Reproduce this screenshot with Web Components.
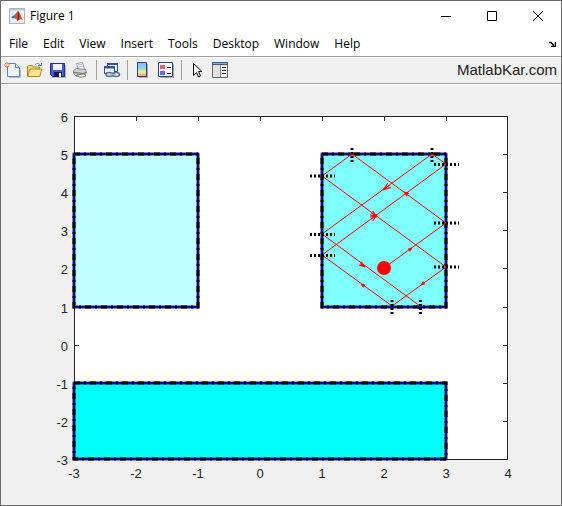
<!DOCTYPE html>
<html lang="en">
<head>
<meta charset="utf-8">
<title>Figure 1</title>
<style>
html,body{height:100%;margin:0}
body{font:12px/16px "Open Sans","Noto Sans",sans-serif;color:#000;background:#fff}
</style>
</head>
<body>
<figure-window>
  <title-bar slot="title">Figure 1</title-bar>
  <menu-bar slot="menu">
    <menu-entry>File</menu-entry><menu-entry>Edit</menu-entry><menu-entry>View</menu-entry><menu-entry>Insert</menu-entry><menu-entry>Tools</menu-entry><menu-entry>Desktop</menu-entry><menu-entry>Window</menu-entry><menu-entry>Help</menu-entry>
  </menu-bar>
  <tool-bar slot="tools">MatlabKar.com</tool-bar>
  <ray-plot></ray-plot>
</figure-window>
<script>
const define = (name, html, setup) => customElements.define(name, class extends HTMLElement {
  constructor() {
    super();
    const t = document.createElement('template');
    t.innerHTML = html;
    this.attachShadow({mode: 'open'}).append(t.content.cloneNode(true));
    if (setup) setup(this.shadowRoot);
  }
});

define('figure-window', `<style>
:host{display:flex;flex-direction:column;box-sizing:border-box;min-height:100%;border:1px solid #6b6b6b;background:#f0f0f0}
main{flex:1}
</style><slot name="title"></slot><slot name="menu"></slot><slot name="tools"></slot><main><slot></slot></main>`);

define('title-bar', `<style>
:host{display:flex;align-items:center;height:30px;background:#fff;padding-left:8px}
h1{flex:1;margin:0 0 0 5px;font:inherit}
button{width:46px;height:30px;padding:0;border:0;background:none;display:grid;place-items:center}
svg{display:block}
</style>
<svg width="16" height="16" viewBox="0 0 16 16"><rect x=".5" y=".5" width="15" height="15" fill="#edf1f5" stroke="#a9b4c0"/><path d="M1 1h14v1.500H1z" fill="#bfccd8"/><path d="M2 9l3-1.500L9 3 7 11l-2-1-1 .5z" fill="#397ca6"/><path d="M5 10c2-1 2-6 4-7 2 1 3 6 5 9-2-1-3-1-4 0l-2 1c0-2-1-3-3-3z" fill="#d35a24"/><path d="M9 3c-.5 3 0 6-1 10l2-2c1-3 0-6-1-8z" fill="#7d221b"/></svg>
<h1><slot></slot></h1>
<button aria-label="Minimize"><svg width="10" height="10"><path d="M0 5.500h10" stroke="#000"/></svg></button>
<button aria-label="Maximize"><svg width="10" height="10"><path d="M.5.500h9v9h-9z" fill="none" stroke="#000"/></svg></button>
<button aria-label="Close"><svg width="10" height="10"><path d="M0 0l10 10M10 0L0 10" stroke="#000"/></svg></button>`);

define('menu-bar', `<style>
:host{display:block;background:#fff}
nav{display:flex;align-items:center;height:25px;padding:0 5px 0 8px;gap:15px}
button{margin-left:auto;padding:0;border:0;background:none}
svg{display:block}
</style><nav><slot></slot><button aria-label="Dock figure"><svg width="7" height="6"><path d="M0 1.500h2l3 3M6.500 1v4.500H2" fill="none" stroke="#000" stroke-width="1.500"/></svg></button></nav>`);

define('menu-entry', `<style>
:host{display:block}
button{display:block;padding:0;border:0;background:none;font:inherit;color:inherit}
</style><button><slot></slot></button>`);

const icons = {
new: `<path d="M5 3h8l4 4v9H5z" fill="#b4bccb"/><path d="M3.500 1.500h8l4 4v9h-12z" fill="#eef4ff" stroke="#6580ae"/><path d="M11.500 1.500v4h4" fill="#c6d8f4" stroke="#6580ae"/><path d="M3 0v6M0 3h6M1 1l4 4M5 1L1 5" stroke="#df7d4b"/><circle cx="3" cy="3" r="1.300" fill="#ffd6a2"/>`,
open: `<path d="M.5 14V4.500l1-1h4l1 1.500h6v2" fill="#f5d875" stroke="#b6861b"/><path d="M.8 14.500l2-7.500h12l-2 7.500z" fill="#ffe694" stroke="#b6861b"/><path d="M8 3c1-2 4-2 5 0M11 3.500h3.500V1" fill="none" stroke="#587c9e"/>`,
save: `<path d="M2 3h14v13H2z" fill="#b4b4c4"/><path d="M.5 1.500h14v13h-12l-2-2z" fill="#4a55d0" stroke="#292c84"/><path d="M3 2h9v6H3z" fill="#eff3ff"/><path d="M4 10h8v5H4z" fill="#18194c"/><path d="M9 11h2v4H9z" fill="#fff"/>`,
print: `<path d="M3.500 1.500l6-1 2 7-6 1z" fill="#fff" stroke="#8d9cb5"/><path d="M.5 8.500l3-2 9 1 1 3-2 3-8 1-3-3z" fill="#d0d0d0" stroke="#888"/><path d="M1 10.500l9 1 3-1M3 13.500l7-1" fill="none" stroke="#666"/><path d="M4 13l7-1 2 2-6 1.500z" fill="#eee" stroke="#888"/><path d="M5 3l4-.5M5.500 5l4-.5" stroke="#a5b8da"/>`,
link: `<path d="M3.500 1.500h10v8h-10z" fill="#eaf2ff" stroke="#315391"/><path d="M3 2h11" stroke="#315391" stroke-width="2"/><path d="M.5 4.500h10v7H.5z" fill="#f3f8ff" stroke="#315391"/><path d="M0 5.500h11" stroke="#315391" stroke-width="2"/><ellipse cx="5.500" cy="12.500" rx="3.500" ry="2" fill="#c7d8e8" stroke="#57738f" stroke-width="1.500"/><ellipse cx="12" cy="12.500" rx="3.500" ry="2" fill="none" stroke="#57738f" stroke-width="1.500"/><path d="M6 12.500h6" stroke="#9fb8cb"/>`,
bar: `<defs><linearGradient id="g" x2="0" y2="1"><stop stop-color="#a9a0ff"/><stop offset=".4" stop-color="#76dff4"/><stop offset=".7" stop-color="#f4ee8c"/><stop offset="1" stop-color="#f48b86"/></linearGradient></defs><path d="M4 2h9v14H4z" fill="#aaa"/><path d="M2.500.500h9v14h-9z" fill="url(#g)" stroke="#2d456f"/>`,
legend: `<path d="M2 2h14v14H2z" fill="#aaa"/><path d="M.5.500h14v14H.5z" fill="#fafafa" stroke="#294478"/><path d="M2 3h5v4H2z" fill="#e65e61"/><path d="M2 9h5v4H2z" fill="#6669e7"/><path d="M9 5.500h4M9 11.500h4" stroke="#111"/>`,
arrow: `<path d="M4.500 1.500v12l3-3 2 4.500 2-1-2-4.500h3.500z" fill="#fff" stroke="#000"/>`,
panel: `<path d="M.5.500h15v15H.5z" fill="#e2e2e2" stroke="#666"/><path d="M0 0h16v3H0z" fill="#355f88"/><path d="M1 1h14v1H1z" fill="#79b1df"/><path d="M8.500 3v12" stroke="#888"/><path d="M9 4h6v11H9z" fill="#fff"/><path d="M10 5.500h4M10 8.500h4M10 11.500h4" stroke="#222"/>`
};
define('tool-icon', `<style>
:host{display:block}
button{display:block;padding:0;border:0;background:none}svg{display:block;overflow:visible}
</style><button><svg width="16" height="16" viewBox="0 0 16 16"></svg></button>`);
const fillIcons = root => root.querySelectorAll('tool-icon').forEach(el => {
  customElements.upgrade(el);
  const b = el.shadowRoot.querySelector('button');
  b.setAttribute('aria-label', el.dataset.label);
  b.firstElementChild.innerHTML = icons[el.dataset.icon];
});
define('tool-bar', `<style>
:host{display:flex;align-items:center;box-sizing:border-box;height:28px;padding:0 4px 0 3px;border-top:1px solid #a0a0a0;border-bottom:1px solid #a0a0a0;box-shadow:inset 0 1px #fff,0 1px #fff;background:#f0f0f0}
div{display:flex;gap:7px;align-items:center}
i{width:1px;height:20px;background:#a0a0a0}
span{margin-left:auto;font:15px/20px "Liberation Sans",sans-serif;color:#222}
</style><div>
<tool-icon data-icon="new" data-label="New Figure"></tool-icon><tool-icon data-icon="open" data-label="Open File"></tool-icon><tool-icon data-icon="save" data-label="Save Figure"></tool-icon><tool-icon data-icon="print" data-label="Print Figure"></tool-icon><i></i>
<tool-icon data-icon="link" data-label="Link Plot"></tool-icon><i></i>
<tool-icon data-icon="bar" data-label="Insert Colorbar"></tool-icon><tool-icon data-icon="legend" data-label="Insert Legend"></tool-icon><i></i>
<tool-icon data-icon="arrow" data-label="Edit Plot"></tool-icon><tool-icon data-icon="panel" data-label="Open Property Inspector"></tool-icon>
</div><span><slot></slot></span>`, fillIcons);

define('ray-plot', `<style>
:host{display:block}
svg{display:block;width:100%}
text{font:13px "Liberation Sans",sans-serif;fill:#262626}
.y{text-anchor:end}.x{text-anchor:middle}
.edge{fill:none;stroke:#0000c0;stroke-width:2;stroke-linejoin:round}
.halo{fill:none;stroke:#00000066;stroke-width:4;stroke-linejoin:round}
.dash{fill:none;stroke:#000;stroke-width:3;stroke-dasharray:6 4 2 4}
.axis{fill:none;stroke:#262626}
.ray{fill:none;stroke:#f00}
.normal{fill:none;stroke:#000;stroke-width:3;stroke-dasharray:2 2}
</style><svg viewBox="1 84 560 421" role="img" aria-label="Reflected ray inside a box">
<path d="M74 116h434v343H74z" fill="#fff"/><g id="axes"></g><g id="boxes"></g>
<path class="ray" d="M384 268L446 223 352 154 322 176 446 267 392 306 322 255 446 164 432 154 322 234 420 306"/>
<g id="heads"></g><circle cx="384" cy="268" r="7" fill="#f00"/>
<path class="normal" d="M310 176h25M310 234.500h25M310 255.500h25M434 164.500h25M434 223h25M434 267h25M352 148v14M432 148v14M392 300v14M420.500 300v14"/>
</svg>`, root => {
  const get = id => root.getElementById(id);
  const px = x => 74 + (x + 3) * 62, py = y => Math.round(116 + (6 - y) * 343 / 9);
  let d = 'M74.500 116.500H507.500V459.500H74.500z', labels = '';
  for (let x = -3; x <= 4; x++) {
    if (x > -3 && x < 4) d += `M${px(x) + .5} 116v5M${px(x) + .5} 460v-5`;
    labels += `<text class="x" x="${px(x)}" y="478">${x}</text>`;
  }
  for (let y = 6; y >= -3; y--) {
    d += `M74 ${py(y) + .5}h5M508 ${py(y) + .5}h-5`;
    labels += `<text class="y" x="68" y="${py(y) + 6}">${y}</text>`;
  }
  get('axes').innerHTML = `<path class="axis" d="${d}"/>` + labels;
  get('boxes').innerHTML = [[-3, 5, -1, 1, '#c0ffff'], [1, 5, 3, 1, '#80ffff'], [-3, -1, 3, -3, '#00ffff']].map(([l, t, r, b, fill]) => {
    const p = `M${px(l)} ${py(t)}H${px(r)}V${py(b)}H${px(l)}z`;
    return `<path d="${p}" fill="${fill}"/><path class="halo" d="${p}"/><path class="edge" d="${p}"/><path class="dash" d="${p}"/>`;
  }).join('');
  get('heads').innerHTML = [[412, 248, -36, 4], [404, 192, 216, 5], [377, 217, 36, 7], [377, 215, -36, 7], [421, 285, 144, 4], [361, 284, 216, 4], [383, 190, 144, 8], [365, 267, 36, 6]]
    .map(([x, y, a, s]) => `<path transform="translate(${x} ${y}) rotate(${a})" d="M0 0L${-s} ${-s / 3}M0 0L${-s} ${s / 3}M0 0H${-s}" stroke="#f00"/>`).join('');
});
</script>
</body>
</html>
